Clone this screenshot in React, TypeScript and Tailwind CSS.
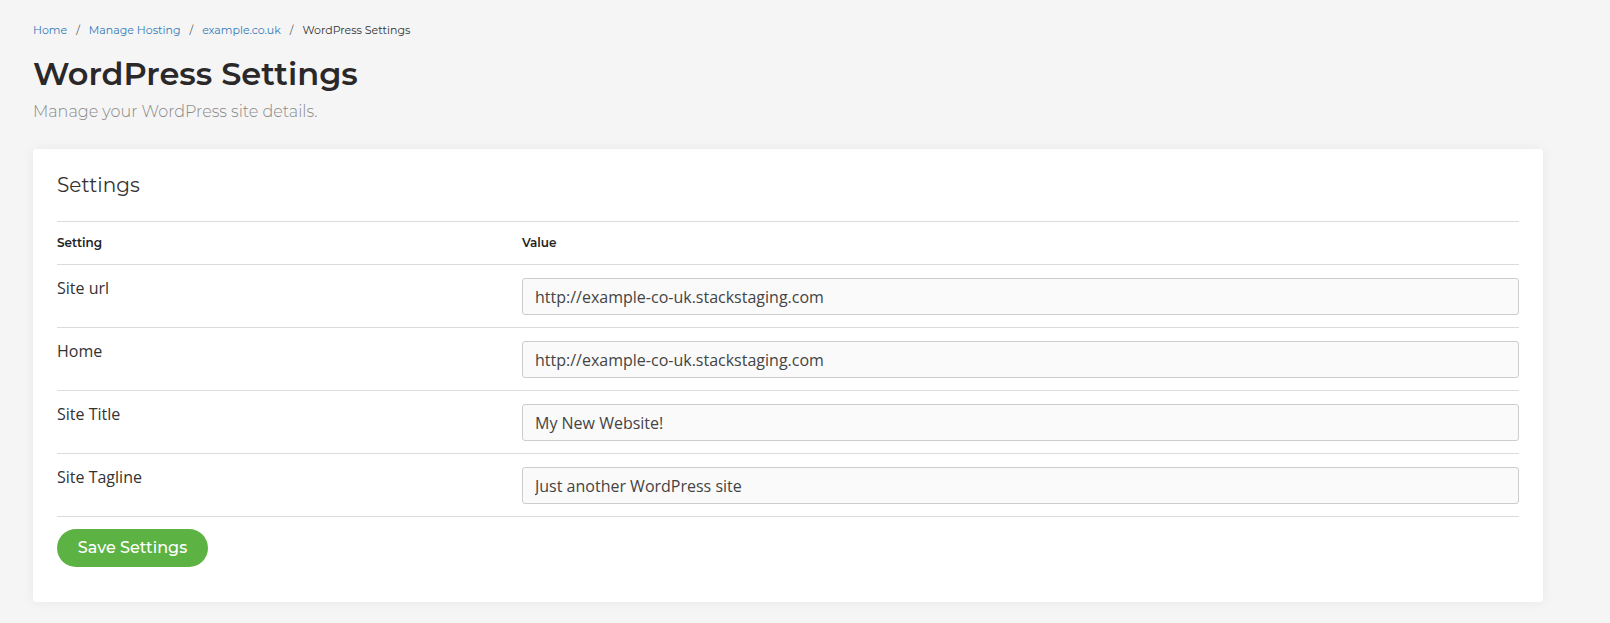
const heading = "font-['Montserrat','Inter','Noto_Sans',sans-serif]"

const rows = [
  { label: 'Site url', value: 'http://example-co-uk.stackstaging.com' },
  { label: 'Home', value: 'http://example-co-uk.stackstaging.com' },
  { label: 'Site Title', value: 'My New Website!' },
  { label: 'Site Tagline', value: 'Just another WordPress site' },
]

function Breadcrumb() {
  const links = ['Home', 'Manage Hosting', 'example.co.uk']
  return (
    <nav className={`${heading} flex items-center text-[11px] leading-4`}>
      {links.map((l) => (
        <span key={l} className="flex items-center">
          <a className="text-[#337ab7]">{l}</a>
          <span className="mx-[9px] text-[#555]">/</span>
        </span>
      ))}
      <span className="text-[#333]">WordPress Settings</span>
    </nav>
  )
}

export default function App() {
  return (
    <div className="min-h-[623px] bg-[#f5f5f5] pl-[33px] pr-[67px] pt-[22px] pb-9 font-['Open_Sans',sans-serif]">
      <Breadcrumb />
      <h1 className={`${heading} mt-4 text-[32px] leading-10 font-semibold text-[#2b2829]`}>
        WordPress Settings
      </h1>
      <p className={`${heading} mt-2 text-[16px] leading-5 font-light text-[#8a8a8a]`}>
        Manage your WordPress site details.
      </p>

      <div className="mt-[27px] rounded-[3px] bg-white px-6 pt-6 pb-[35px] shadow-[0_0_12px_rgba(0,0,0,0.06)]">
        <h2 className={`${heading} text-[20px] leading-6 font-normal text-[#333]`}>Settings</h2>

        <div className="mt-6 border-t border-[#dcdcdc]">
          <div className={`${heading} grid h-[42px] grid-cols-[465px_1fr] items-center text-[12px] font-semibold text-[#222]`}>
            <div>Setting</div>
            <div>Value</div>
          </div>
          {rows.map((r) => (
            <div
              key={r.label}
              className="grid grid-cols-[465px_1fr] border-t border-[#dcdcdc] pt-[13px] pb-3 text-[16px] text-[#333]"
            >
              <div className="leading-5">{r.label}</div>
              <input
                readOnly
                value={r.value}
                className="h-[37px] w-full rounded-[3px] border border-[#cdcdcd] bg-[#fafafa] px-3 text-[16px] text-[#444] outline-none"
              />
            </div>
          ))}
          <div className="border-t border-[#dcdcdc] pt-3">
            <button
              className={`${heading} h-[38px] w-[151px] rounded-full bg-[#5cb343] text-[16px] font-medium text-white`}
            >
              Save Settings
            </button>
          </div>
        </div>
      </div>
    </div>
  )
}
